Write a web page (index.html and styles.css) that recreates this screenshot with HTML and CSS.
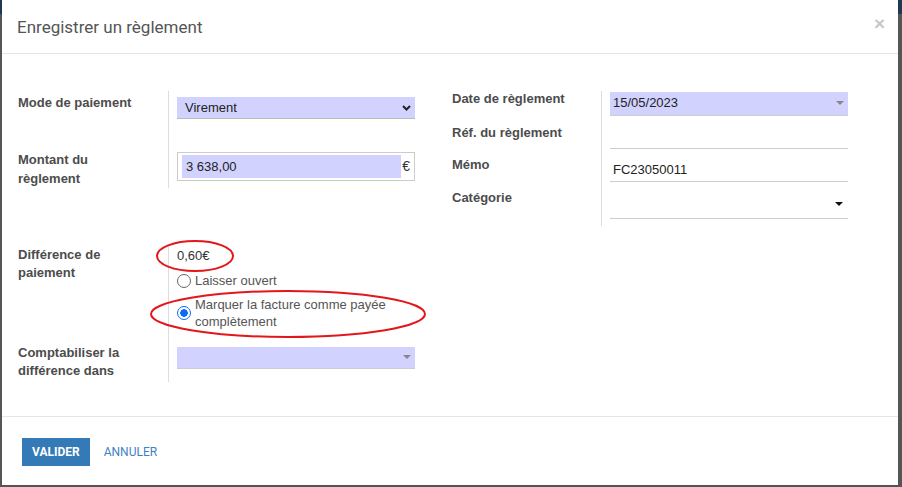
FILE: index.html
```html
<!DOCTYPE html>
<html lang="fr">
  <head>
    <meta charset="UTF-8" />
    <meta name="viewport" content="width=device-width, initial-scale=1.0" />
    <title>Enregistrer un règlement</title>
    <link rel="stylesheet" href="styles.css">
  </head>
  <body>
    <div class="modal">
      <header class="modal-header">
        <h4>Enregistrer un règlement</h4>
        <span class="close">×</span>
      </header>

      <main class="modal-body">
        <div class="columns">
          <div class="group group-left">
            <label class="lbl row-mode">Mode de paiement</label>
            <div class="fld row-mode">
              <div class="select lavender">
                <span>Virement</span>
                <svg width="9" height="6" viewBox="0 0 9 6"><path d="M1 1l3.5 3.5L8 1" stroke="#222" stroke-width="2" fill="none"/></svg>
              </div>
            </div>
            <label class="lbl row-amount">Montant du<br />règlement</label>
            <div class="fld row-amount">
              <div class="money">
                <span class="money-val">3 638,00</span>
                <span class="cur">€</span>
              </div>
            </div>
          </div>

          <div class="group group-right">
            <label class="lbl r1">Date de règlement</label>
            <div class="fld r1">
              <div class="line lavender date">
                <span>15/05/2023</span>
                <i class="caret grey"></i>
              </div>
            </div>
            <label class="lbl r2">Réf. du règlement</label>
            <div class="fld r2"><div class="line underline ref"></div></div>
            <label class="lbl r3">Mémo</label>
            <div class="fld r3"><div class="line underline memo">FC23050011</div></div>
            <label class="lbl r4">Catégorie</label>
            <div class="fld r4">
              <div class="line underline cat"><i class="caret dark"></i></div>
            </div>
          </div>
        </div>

        <div class="group group-diff">
          <label class="lbl row-diff">Différence de<br />paiement</label>
          <div class="fld row-diff">
            <div class="diff-amount">0,60€</div>
            <label class="radio">
              <span class="dot"></span>
              <span>Laisser ouvert</span>
            </label>
            <label class="radio">
              <span class="dot on"></span>
              <span>Marquer la facture comme payée<br />complètement</span>
            </label>
          </div>
          <label class="lbl row-acc">Comptabiliser la<br />différence dans</label>
          <div class="fld row-acc">
            <div class="line lavender acc"><i class="caret grey"></i></div>
          </div>
        </div>

        <!-- hand-drawn marks around the difference -->
        <svg class="marks" width="896" height="360" viewBox="0 53 896 360">
          <ellipse cx="193" cy="255" rx="38" ry="15" />
          <ellipse cx="286" cy="313" rx="137" ry="23" />
        </svg>
      </main>

      <footer class="modal-footer">
        <button class="btn-primary">Valider</button>
        <button class="btn-link">Annuler</button>
      </footer>
    </div>
  </body>
</html>
```

FILE: styles.css
```css
body {
  margin: 0;
  padding: 0;
  background: linear-gradient(#1d3a52 0, #1d3a52 14px, #555 14px);
  font-family: "Liberation Sans", Arial, sans-serif;
  font-size: 13px;
  color: #333;
  height: 487px;
  overflow: hidden;
}
.modal {
  margin-left: 2px;
  width: 896px;
  height: 485px;
  background: #fff;
  display: flex;
  flex-direction: column;
  position: relative;
}
.modal-header {
  height: 53px;
  border-bottom: 1px solid #e5e5e5;
  display: flex;
  align-items: center;
  justify-content: space-between;
  padding: 0 13px 0 15px;
}
.modal-header h4 {
  margin: 0;
  font-family: Roboto, sans-serif;
  font-weight: 400;
  font-size: 17px;
  color: #555;
  padding-top: 1px;
}
.close {
  font-family: "Liberation Sans", Arial, sans-serif;
  font-size: 19px;
  font-weight: 700;
  color: #c8c8c8;
  margin-top: -6px;
}
.modal-body {
  flex: 1;
  padding: 37px 0 0 16px;
  position: relative;
}
.columns {
  display: flex;
  align-items: flex-start;
  gap: 37px;
}
.group {
  display: grid;
  grid-template-columns: 150px 247px;
  align-content: start;
}
.group-right {
  grid-template-columns: 149px 247px;
}
.lbl {
  font-weight: 700;
  color: #4c4c4c;
  line-height: 18px;
}
.fld {
  border-left: 1px solid #ddd;
  padding-left: 8px;
}

/* left block */
.row-mode.lbl { height: 59px; padding-top: 3px; box-sizing: border-box; }
.row-mode.fld { padding-top: 6px; }
.row-amount.lbl { line-height: 19px; height: 38px; }
.row-amount.fld { padding-top: 2px; }

.lavender { background: #d2d2ff; }
.select {
  height: 21px;
  border-bottom: 1px solid #bbb;
  display: flex;
  align-items: center;
  justify-content: space-between;
  padding: 0 4px 0 8px;
  color: #222;
}
.money {
  height: 29px;
  border: 1px solid #ccc;
  box-sizing: border-box;
  display: flex;
  align-items: stretch;
  padding: 2px 4px 2px 4px;
}
.money-val {
  flex: 1;
  background: #d2d2ff;
  padding-left: 4px;
  line-height: 23px;
  color: #222;
}
.cur {
  line-height: 23px;
  padding-left: 1px;
  font-size: 14px;
}

/* right block */
.r1.lbl { height: 25px; line-height: 16px; }
.r2.lbl { height: 33px; padding-top: 9px; line-height: 16px; box-sizing: border-box; }
.r3.lbl { height: 33px; padding-top: 8px; line-height: 16px; box-sizing: border-box; }
.r4.lbl { height: 44px; padding-top: 8px; line-height: 16px; box-sizing: border-box; }
.line {
  position: relative;
  box-sizing: border-box;
  color: #222;
}
.date {
  margin-top: 1px;
  height: 24px;
  border-bottom: 1px solid #ccc;
  padding: 3px 0 0 3px;
}
.underline { border-bottom: 1px solid #ccc; }
.ref { height: 33px; }
.memo { height: 33px; padding: 13px 0 0 3px; }
.cat { height: 37px; }
.caret {
  position: absolute;
  width: 0;
  height: 0;
  border-left: 4px solid transparent;
  border-right: 4px solid transparent;
}
.caret.grey { border-top: 4px solid #888; right: 4px; top: 9px; }
.caret.dark { border-top: 4px solid #111; right: 5px; top: 20px; }

/* difference block */
.group-diff {
  margin-top: 20px;
}
.row-diff.lbl { height: 98px; }
.row-diff.fld { padding-top: 1px; }
.diff-amount {
  line-height: 18px;
  color: #333;
}
.radio {
  display: flex;
  align-items: center;
  gap: 4px;
  color: #555;
  line-height: 17px;
  margin-top: 7px;
}
.radio + .radio { margin-top: 7px; }
.dot {
  width: 12px;
  height: 12px;
  border: 1px solid #666;
  border-radius: 50%;
  flex: none;
}
.dot.on {
  border: 1px solid #0b6cf0;
  background: radial-gradient(circle, #0b6cf0 0, #0b6cf0 3.5px, #fff 4px);
}
.row-acc.fld { padding-top: 3px; padding-bottom: 13px; }
.acc {
  height: 22px;
  border-bottom: 1px solid #ccc;
}
.acc .caret.grey { top: 8px; }

.marks {
  position: absolute;
  left: 0;
  top: 0;
  overflow: visible;
  pointer-events: none;
}
.marks ellipse {
  fill: none;
  stroke: #e3161b;
  stroke-width: 2;
}

.modal-footer {
  height: 68px;
  border-top: 1px solid #e5e5e5;
  display: flex;
  align-items: center;
  padding: 0 0 0 20px;
  gap: 6px;
}
.modal-footer button {
  font-family: Roboto, sans-serif;
  font-size: 12px;
  text-transform: uppercase;
  border: none;
  cursor: pointer;
}
.btn-primary {
  background: #337ab7;
  color: #fff;
  font-weight: 700;
  height: 28px;
  padding: 0 10px;
  margin-top: 1px;
}
.btn-link {
  background: none;
  color: #3f82c4;
  padding: 0 8px;
  margin-top: 2px;
}
```
